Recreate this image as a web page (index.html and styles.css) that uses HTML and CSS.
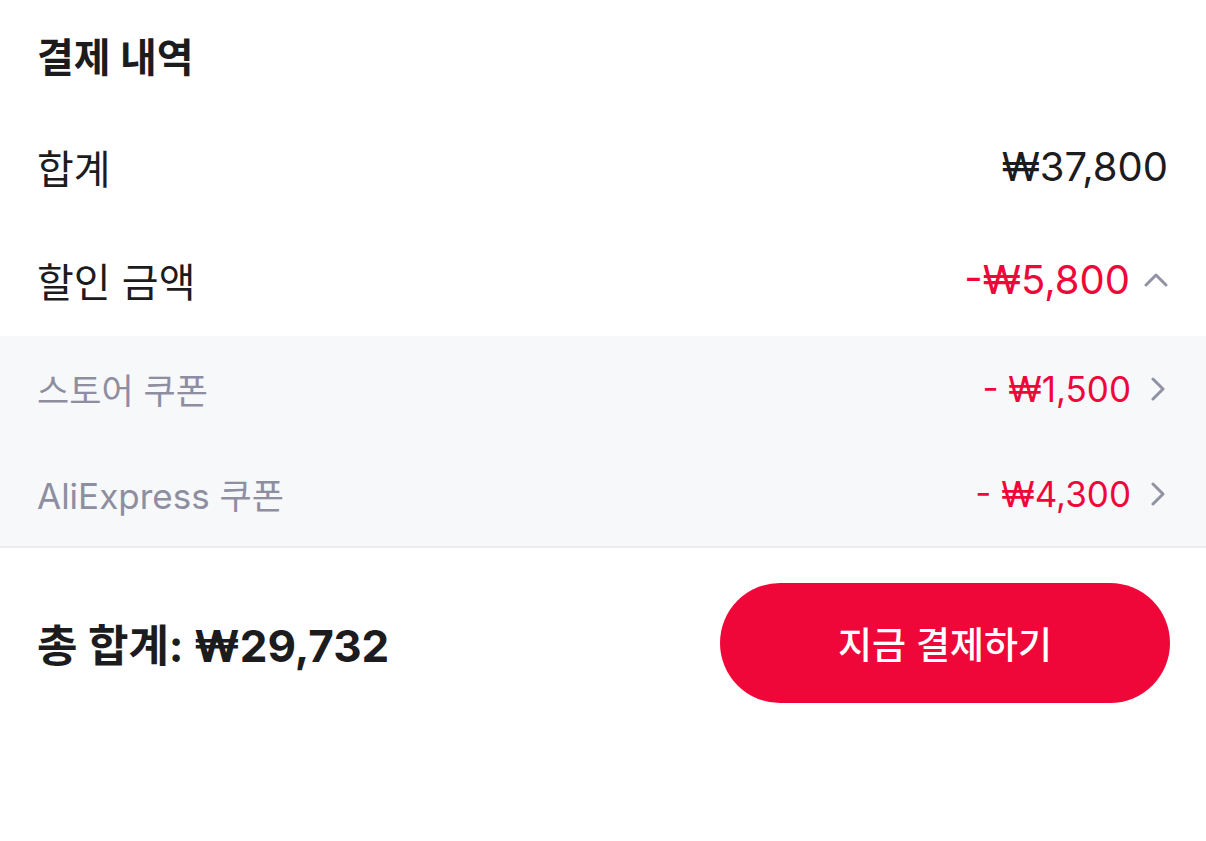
FILE: index.html
```html
<!DOCTYPE html>
<html lang="ko">

<head>
    <meta charset="UTF-8">
    <meta name="viewport" content="width=device-width, initial-scale=1.0">
    <title>결제 내역</title>
    <link rel="stylesheet" href="styles.css">
</head>

<body>
    <div class="summary">
        <div class="row title-row">
            <h2>결제 내역</h2>
        </div>
        <div class="row">
            <span class="label">합계</span>
            <span class="value">₩37,800</span>
        </div>
        <div class="row">
            <span class="label">할인 금액</span>
            <span class="value discount">-₩5,800
                <svg class="chev-up" viewBox="0 0 24 14" width="24" height="14">
                    <path d="M2 12 L12 2 L22 12" fill="none" stroke="#9193a4" stroke-width="3" stroke-linecap="round" stroke-linejoin="round" />
                </svg>
            </span>
        </div>

        <div class="coupons">
            <div class="row coupon">
                <span class="label">스토어 쿠폰</span>
                <span class="value discount">- ₩1,500
                    <svg class="chev" viewBox="0 0 14 24" width="14" height="24">
                        <path d="M2 2 L12 12 L2 22" fill="none" stroke="#9193a4" stroke-width="3" stroke-linecap="round" stroke-linejoin="round" />
                    </svg>
                </span>
            </div>
            <div class="row coupon">
                <span class="label">AliExpress 쿠폰</span>
                <span class="value discount">- ₩4,300
                    <svg class="chev" viewBox="0 0 14 24" width="14" height="24">
                        <path d="M2 2 L12 12 L2 22" fill="none" stroke="#9193a4" stroke-width="3" stroke-linecap="round" stroke-linejoin="round" />
                    </svg>
                </span>
            </div>
        </div>

        <div class="footer">
            <span class="total">총 합계: ₩29,732</span>
            <button class="pay-btn">지금 결제하기</button>
        </div>
    </div>
</body>

</html>
```

FILE: styles.css
```css
body {
    margin: 0;
    padding: 0;
    background-color: #fff;
    color: #1c1c1e;
    font-family: Inter, "Noto Sans CJK KR", sans-serif;
}

.summary {
    display: flex;
    flex-direction: column;
}

.row {
    display: flex;
    align-items: center;
    justify-content: space-between;
    height: 113px;
    padding: 0 38px 0 37px;
    font-size: 40px;
}

.title-row {
    height: 110px;
}

.title-row h2 {
    margin: 0;
    font-size: 40px;
    font-weight: 700;
    color: #1c1c1e;
}

.value {
    display: flex;
    align-items: center;
    gap: 14px;
}

.discount {
    color: #f0073a;
}

.coupons {
    background-color: #f7f8fa;
    border-bottom: 2px solid #ececef;
}

.coupon {
    height: 105px;
    font-size: 35px;
}

.coupon .label {
    color: #8e8ea1;
}

.coupon .value {
    gap: 20px;
    margin-right: 3px;
}

.footer {
    display: flex;
    align-items: center;
    justify-content: space-between;
    padding: 35px 36px 0 37px;
}

.total {
    font-size: 44px;
    font-weight: 700;
    color: #1c1c1e;
}

.pay-btn {
    width: 450px;
    height: 120px;
    border: none;
    border-radius: 60px;
    background-color: #f0073a;
    color: #fff;
    font-family: Inter, "Noto Sans CJK KR", sans-serif;
    font-size: 37px;
    font-weight: 500;
    cursor: pointer;
}
```
